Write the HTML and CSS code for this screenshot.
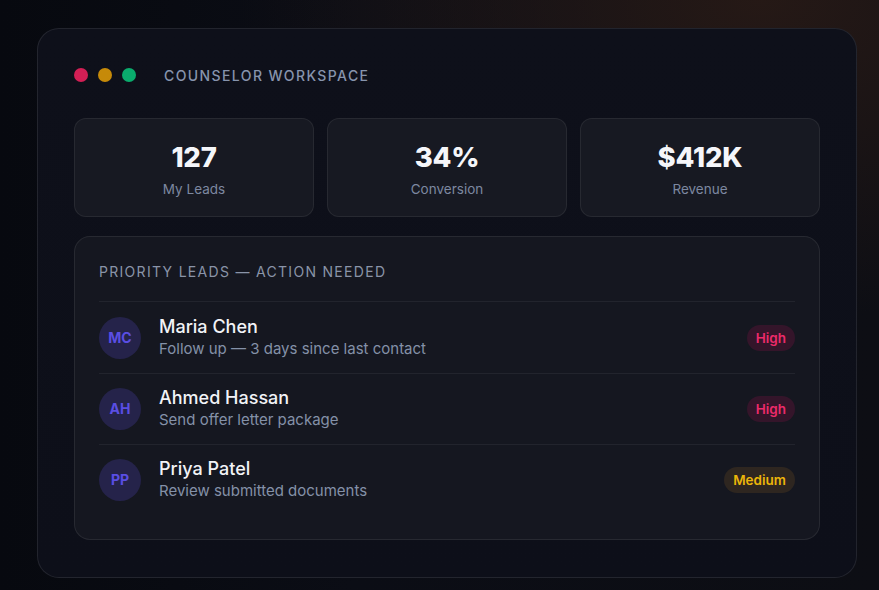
FILE: index.html
```html
<!DOCTYPE html>
<html lang="en">
<head>
<meta charset="utf-8">
<title>Counselor Workspace</title>
<link rel="stylesheet" href="styles.css">
</head>
<body>
<div class="page">
  <div class="window">
    <div class="header">
      <div class="dots">
        <span class="dot red"></span>
        <span class="dot yellow"></span>
        <span class="dot green"></span>
      </div>
      <div class="title">COUNSELOR WORKSPACE</div>
    </div>
    <div class="stats">
      <div class="stat"><div class="value">127</div><div class="label">My Leads</div></div>
      <div class="stat"><div class="value">34%</div><div class="label">Conversion</div></div>
      <div class="stat"><div class="value">$412K</div><div class="label">Revenue</div></div>
    </div>
    <div class="panel">
      <div class="panel-title">PRIORITY LEADS — ACTION NEEDED</div>
      <div class="row">
        <div class="avatar">MC</div>
        <div class="info"><div class="name">Maria Chen</div><div class="sub">Follow up — 3 days since last contact</div></div>
        <span class="badge high">High</span>
      </div>
      <div class="row">
        <div class="avatar">AH</div>
        <div class="info"><div class="name">Ahmed Hassan</div><div class="sub">Send offer letter package</div></div>
        <span class="badge high">High</span>
      </div>
      <div class="row">
        <div class="avatar">PP</div>
        <div class="info"><div class="name">Priya Patel</div><div class="sub">Review submitted documents</div></div>
        <span class="badge medium">Medium</span>
      </div>
    </div>
  </div>
</div>
</body>
</html>
```

FILE: styles.css
```css
* { box-sizing: border-box; margin: 0; padding: 0; }
html, body { width: 879px; height: 590px; overflow: hidden; }
body {
  font-family: Inter, "Noto Sans", sans-serif;
  background:
    radial-gradient(ellipse 520px 320px at 760px 0px, rgba(40, 26, 22, 0.9), rgba(40, 26, 22, 0) 100%),
    linear-gradient(90deg, #07090f 0%, #0b0d15 40%, #0d0e14 100%);
}
.page { padding: 28px 22px 0 37px; }
.window {
  width: 820px;
  height: 550px;
  border-radius: 22px;
  border: 1px solid rgba(255, 255, 255, 0.09);
  background: linear-gradient(180deg, #0e101a 0%, #0d0f19 100%);
  padding: 35px 36px 36px 36px;
}
.header { display: flex; align-items: center; height: 22px; gap: 28px; }
.dots { display: flex; gap: 10px; }
.dot { width: 14px; height: 14px; border-radius: 50%; display: block; }
.red { background: #d31f55; }
.yellow { background: #c68a09; }
.green { background: #0aac6d; }
.title { color: #8794ad; font-size: 14px; font-weight: 500; letter-spacing: 1.4px; }
.stats {
  margin-top: 32px;
  display: grid;
  grid-template-columns: repeat(3, 1fr);
  gap: 13px;
}
.stat {
  background: #171922;
  border: 1px solid rgba(255, 255, 255, 0.07);
  border-radius: 12px;
  padding: 22px 16px 18px;
  text-align: center;
}
.value { color: #f5f6fa; font-size: 27.5px; font-weight: 800; line-height: 32px; letter-spacing: -0.2px; }
.label { color: #7d88a0; font-size: 13.5px; line-height: 18px; margin-top: 7px; }
.panel {
  margin-top: 19px;
  background: #151720;
  border: 1px solid rgba(255, 255, 255, 0.08);
  border-radius: 16px;
  padding: 25px 24px 24px;
}
.panel-title { color: #8a94a8; font-size: 14px; line-height: 20px; letter-spacing: 1.3px; margin-bottom: 19px; }
.row {
  display: flex;
  align-items: center;
  border-top: 1px solid rgba(255, 255, 255, 0.06);
  padding: 14px 0 14px;
}
.row:nth-child(3) { padding: 13px 0 14px; }
.row:nth-child(4) { padding: 13px 0 14px; }
.avatar {
  width: 42px; height: 42px; border-radius: 50%;
  background: #25234a;
  color: #5a4ee3;
  font-size: 14px; font-weight: 700;
  display: flex; align-items: center; justify-content: center;
  flex-shrink: 0;
}
.info { flex: 1; margin-left: 18px; }
.name { color: #f2f3f7; font-size: 18px; font-weight: 500; line-height: 21px; }
.sub { color: #8491a8; font-size: 15px; line-height: 20px; margin-top: 2px; }
.badge {
  border-radius: 999px;
  padding: 4px 9px;
  font-size: 13.5px; font-weight: 600; line-height: 18px;
}
.high { background: #34152a; color: #ec2b6a; }
.medium { background: #2e2620; color: #ebb50a; }
```
